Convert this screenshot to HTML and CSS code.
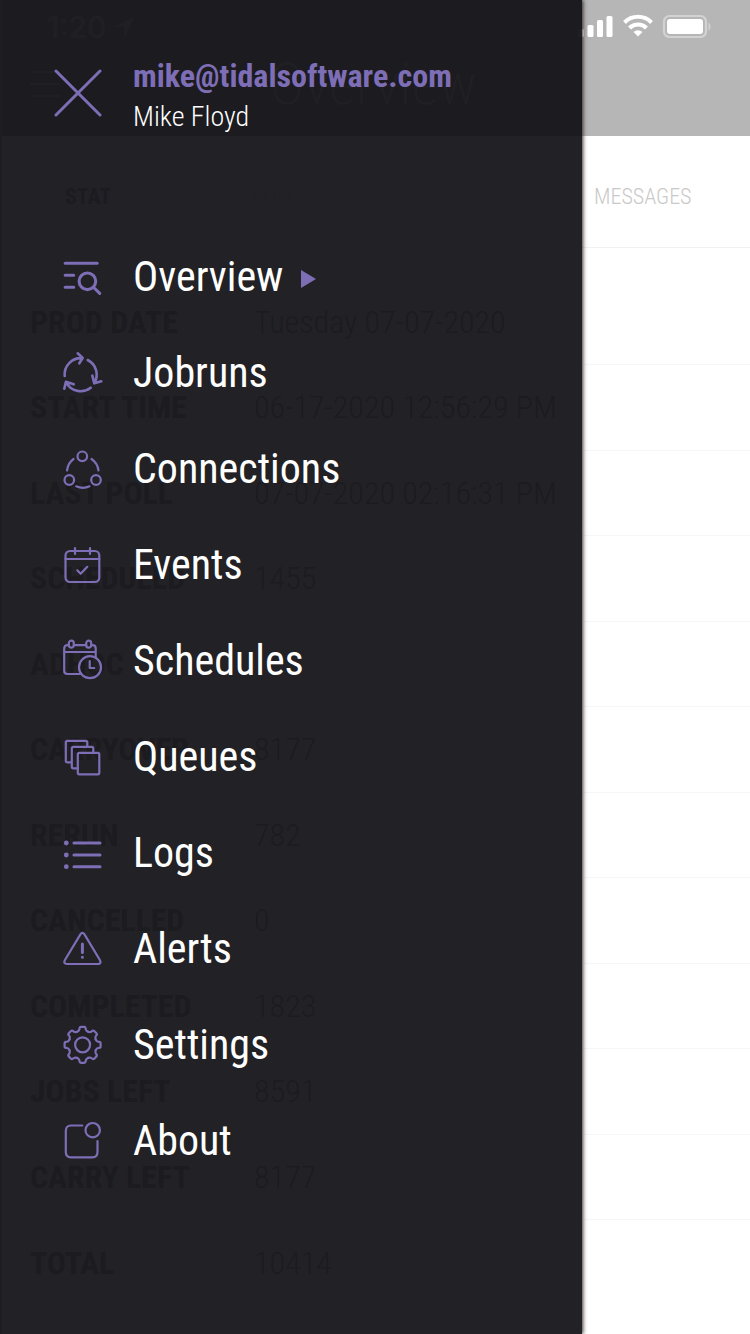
FILE: index.html
```html
<!DOCTYPE html>
<html lang="en">
<head>
<meta charset="utf-8">
<title>Tidal</title>
<link rel="stylesheet" href="styles.css">
</head>
<body>
<div class="screen">
  <main class="app">
    <header class="app-header">
      <div class="status">
        <span class="clock">1:20</span>
        <svg class="locate" viewBox="0 0 20 20"><path d="M0 10 20 0 11 20 10 10z"/></svg>
        <svg class="signals" viewBox="0 0 134 26">
          <rect x="1" y="15" width="6" height="8" rx="1.5"/>
          <rect x="10.5" y="11" width="6" height="12" rx="1.5"/>
          <rect x="20" y="6" width="6" height="17" rx="1.5"/>
          <rect x="29.5" y="2" width="6" height="21" rx="1.5"/>
          <g class="wifi"><path d="M47.5 8.5a19 19 0 0 1 27 0"/><path d="M52.5 14a12 12 0 0 1 17 0"/></g>
          <path d="M61 22.5 56.5 18a6.5 6.5 0 0 1 9 0z"/>
          <rect class="battery" x="87" y="2" width="42" height="21" rx="5.5"/>
          <rect x="90" y="5" width="36" height="15" rx="3"/>
          <path class="cap" d="M131.5 8.5q2 1 2 4t-2 4z"/>
        </svg>
      </div>
      <div class="title-row">
        <svg class="burger" viewBox="0 0 30 26"><path d="M0 1h30M0 13h30M0 25h30"/></svg>
        <h1 class="title">Overview</h1>
      </div>
    </header>
    <nav class="tabs"><span class="tab on">STAT</span><span class="tab">POLL</span><span class="tab">USERS</span><span class="tab">MESSAGES</span></nav>
    <dl class="stats">
      <div class="stat first"><dt>PROD DATE</dt><dd>Tuesday 07-07-2020</dd></div>
      <div class="stat"><dt>START TIME</dt><dd>06-17-2020 12:56:29 PM</dd></div>
      <div class="stat"><dt>LAST POLL</dt><dd>07-07-2020 02:16:31 PM</dd></div>
      <div class="stat"><dt>SCHEDULED</dt><dd>1455</dd></div>
      <div class="stat"><dt>ADHOC</dt><dd></dd></div>
      <div class="stat"><dt>CARRYOVER</dt><dd>8177</dd></div>
      <div class="stat"><dt>RERUN</dt><dd>782</dd></div>
      <div class="stat"><dt>CANCELLED</dt><dd>0</dd></div>
      <div class="stat"><dt>COMPLETED</dt><dd>1823</dd></div>
      <div class="stat"><dt>JOBS LEFT</dt><dd>8591</dd></div>
      <div class="stat"><dt>CARRY LEFT</dt><dd>8177</dd></div>
      <div class="stat last"><dt>TOTAL</dt><dd>10414</dd></div>
    </dl>
  </main>

  <aside class="drawer">
    <header class="drawer-head">
      <svg class="close" viewBox="0 0 48 48"><path d="M2 2 46 46M46 2 2 46"/></svg>
      <div class="user">
        <span class="email">mike@tidalsoftware.com</span>
        <span class="name">Mike Floyd</span>
      </div>
    </header>
    <nav class="menu">
      <a class="item"><svg class="icon heavy" viewBox="0 0 40 40"><path d="M2.2 5.3H34.2M2.2 17.2H10.7M2.2 29.3H10.7M30.7 29.5 36.7 35.3"/><circle cx="24.4" cy="23.3" r="8.3"/></svg><span>Overview</span><svg class="arrow" viewBox="0 0 15 18"><path d="M0 0 15 9 0 18z"/></svg></a>
      <a class="item"><svg class="icon mid" viewBox="0 0 40 40"><path d="M1.7 22A16.3 16.3 0 0 1 19 4.2M14.7-.7 19.7 4 16.3 9.3M24.7 6A16.3 16.3 0 0 1 31.5 28.7M29.3 21.7 31.3 29.3 38.3 27.3M27.7 33.7A16.3 16.3 0 0 1 3 28M1.3 34.7 2.9 27.7 10.7 30.3"/></svg><span>Jobruns</span></a>
      <a class="item"><svg class="icon" viewBox="0 0 40 40"><circle cx="19.3" cy="6.3" r="4.8"/><circle cx="6.3" cy="30" r="4.8"/><circle cx="33" cy="30" r="4.8"/><path d="M4 20.5Q5 13 10.5 9M28.5 9Q34.5 13 35.5 20.5M13.2 36.3Q20 39.3 26.5 36.3"/></svg><span>Connections</span></a>
      <a class="item"><svg class="icon" viewBox="0 0 40 40"><rect x="2.5" y="5" width="33.8" height="31" rx="4.5"/><path d="M2.5 13H36.3M12 2V8M27 2V8M14.3 24.3 17.6 27.8 24.3 20.8"/></svg><span>Events</span></a>
      <a class="item"><svg class="icon" viewBox="0 0 40 40"><path d="M5.8 3.2H4.5Q1.2 3.2 1.2 6.5V28.8Q1.2 32 4.5 32H17M10.8 3.2H23.2M28.2 3.2H29.5Q32.7 3.2 32.7 6.5V15M1.2 10H32.7"/><rect x="5.8" y="-1.3" width="5" height="7" rx="2.5"/><rect x="23.2" y="-1.3" width="5" height="7" rx="2.5"/><circle cx="27" cy="25.2" r="11"/><path d="M26.7 19.2V26H31.2"/></svg><span>Schedules</span></a>
      <a class="item"><svg class="icon" viewBox="0 0 40 40"><rect x="14.8" y="14.8" width="21.5" height="21.5" rx="1.5"/><path d="M30.3 14.8V10.3Q30.3 8.8 28.8 8.8H10.3Q8.8 8.8 8.8 10.3V28.8Q8.8 30.3 10.3 30.3H14.8M24.3 8.8V4.3Q24.3 2.8 22.8 2.8H4.3Q2.8 2.8 2.8 4.3V22.8Q2.8 24.3 4.3 24.3H8.8"/></svg><span>Queues</span></a>
      <a class="item"><svg class="icon heavy" viewBox="0 0 40 40"><path d="M11 9H37M11 21H37M11 32.7H37"/><path class="dots" d="M3.3 9h.01M3.3 21h.01M3.3 32.7h.01"/></svg><span>Logs</span></a>
      <a class="item"><svg class="icon" viewBox="0 0 40 40"><path d="M17.4 4.4Q19.4 1.5 21.5 4.4L37 30.3Q38.6 33.8 35 34H4Q.2 33.8 1.8 30.3Z"/><path class="mark" d="M19.4 14V22.5M19.4 27.3h.01"/></svg><span>Alerts</span></a>
      <a class="item"><svg class="icon" viewBox="-19.6 -18.8 40 40"><defs><path id="tooth" d="M-5.4-13.1C-4-13.8-3.3-14.3-3.2-15.5Q-3.1-18-1.6-18H1.6Q3.1-18 3.2-15.5C3.3-14.3 4-13.8 5.4-13.1"/></defs><use href="#tooth"/><use href="#tooth" transform="rotate(45)"/><use href="#tooth" transform="rotate(90)"/><use href="#tooth" transform="rotate(135)"/><use href="#tooth" transform="rotate(180)"/><use href="#tooth" transform="rotate(225)"/><use href="#tooth" transform="rotate(270)"/><use href="#tooth" transform="rotate(315)"/><circle r="7.5"/></svg><span>Settings</span></a>
      <a class="item"><svg class="icon" viewBox="0 0 40 40"><path d="M19.3 3.5H8Q2.8 3.5 2.8 9V30Q2.8 35.3 8 35.3H29.3Q34.5 35.3 34.5 30V19"/><circle cx="29.7" cy="8.2" r="7.2"/></svg><span>About</span></a>
    </nav>
  </aside>
</div>
</body>
</html>
```
FILE: styles.css
```css
* { box-sizing: border-box; }
body {
  margin: 0;
  font-family: "Roboto Condensed", Roboto, sans-serif;
  font-stretch: 75%;
}
.screen { position: relative; width: 750px; height: 1334px; overflow: hidden; background: #fff; }
.app { height: 100%; display: flex; flex-direction: column; }

.app-header { height: 136px; background: #b6b6b6; color: #fff; }
.status { display: flex; align-items: center; height: 54px; padding: 0 39px 0 47px; }
.clock { font: 500 30px "Inter", sans-serif; }
.locate { width: 20px; height: 20px; margin-left: 8px; fill: #fff; }
.signals { width: 134px; height: 26px; margin-left: auto; fill: #fff; }
.wifi { fill: none; stroke: #fff; stroke-width: 4; }
.battery { fill: none; stroke: #d2d2d2; stroke-width: 2.2; }
.cap { fill: #d2d2d2; }
.title-row { display: flex; align-items: center; height: 60px; padding-left: 30px; }
.burger { width: 30px; height: 26px; stroke: #fff; stroke-width: 2; }
.title { margin: 0 0 0 210px; font-size: 58px; font-weight: 200; letter-spacing: .5px; line-height: 60px; }

.tabs { display: flex; height: 112px; padding-top: 10px; border-bottom: 1px solid #f1f1f1; font-size: 22px; font-weight: 300; color: #c9c9c9; align-items: center; }
.tab { flex: none; width: 170px; padding-left: 4px; }
.tab:first-child { width: 248px; padding-left: 65px; }
.tab:nth-child(2) { width: 175px; }
.tab:nth-child(3) { width: 167px; }
.on { font-weight: 700; color: #444; }

.stats { margin: 0; }
.stat { display: flex; align-items: center; height: 85.5px; padding-left: 30px; border-bottom: 1px solid #f7f7f7; font-size: 32px; }
.first { height: 117px; padding-top: 31px; }
.last { border: 0; }
dt { width: 224px; font-size: 31.8px; font-weight: 700; color: #3a3a3a; }
dd { margin: 0; font-weight: 300; color: #444; }

.drawer {
  position: absolute;
  top: 0;
  left: 0;
  width: 582px;
  height: 1334px;
  border-left: 2px solid #1e1d21;
  box-shadow: 1px 0 4px rgba(30, 20, 20, .9);
}
.drawer-head { display: flex; height: 136px; padding: 0 0 0 52px; background: rgba(20, 19, 23, .95); }
.close { width: 48px; height: 48px; margin-top: 69px; fill: none; stroke: #7d6eb6; stroke-width: 3; stroke-linecap: round; }
.user { display: flex; flex-direction: column; margin: 56px 0 0 31px; }
.email { flex: none; height: 41px; font-size: 32px; font-weight: 700; line-height: 40px; color: #7d6eb6; }
.name { flex: none; font-size: 28px; font-weight: 300; line-height: 39px; color: #fff; }

.menu { height: 1198px; padding-top: 93px; background: rgba(27, 26, 30, .97); }
.item { display: flex; align-items: center; height: 96px; padding-left: 61px; color: #fff; font-size: 42px; }
.item span { margin: -2px 0 0 30px; }
.icon { width: 40px; height: 40px; margin-top: 2px; overflow: visible; fill: none; stroke: #7d6eb6; stroke-width: 2.2; stroke-linecap: round; stroke-linejoin: round; }
.mid { stroke-width: 2.6; }
.heavy { stroke-width: 3.1; }
.dots { stroke-width: 4.8; }
.mark { stroke-width: 3; }
.arrow { width: 15px; height: 18px; margin: 4px 0 0 18px; fill: #7d6eb6; }
```
